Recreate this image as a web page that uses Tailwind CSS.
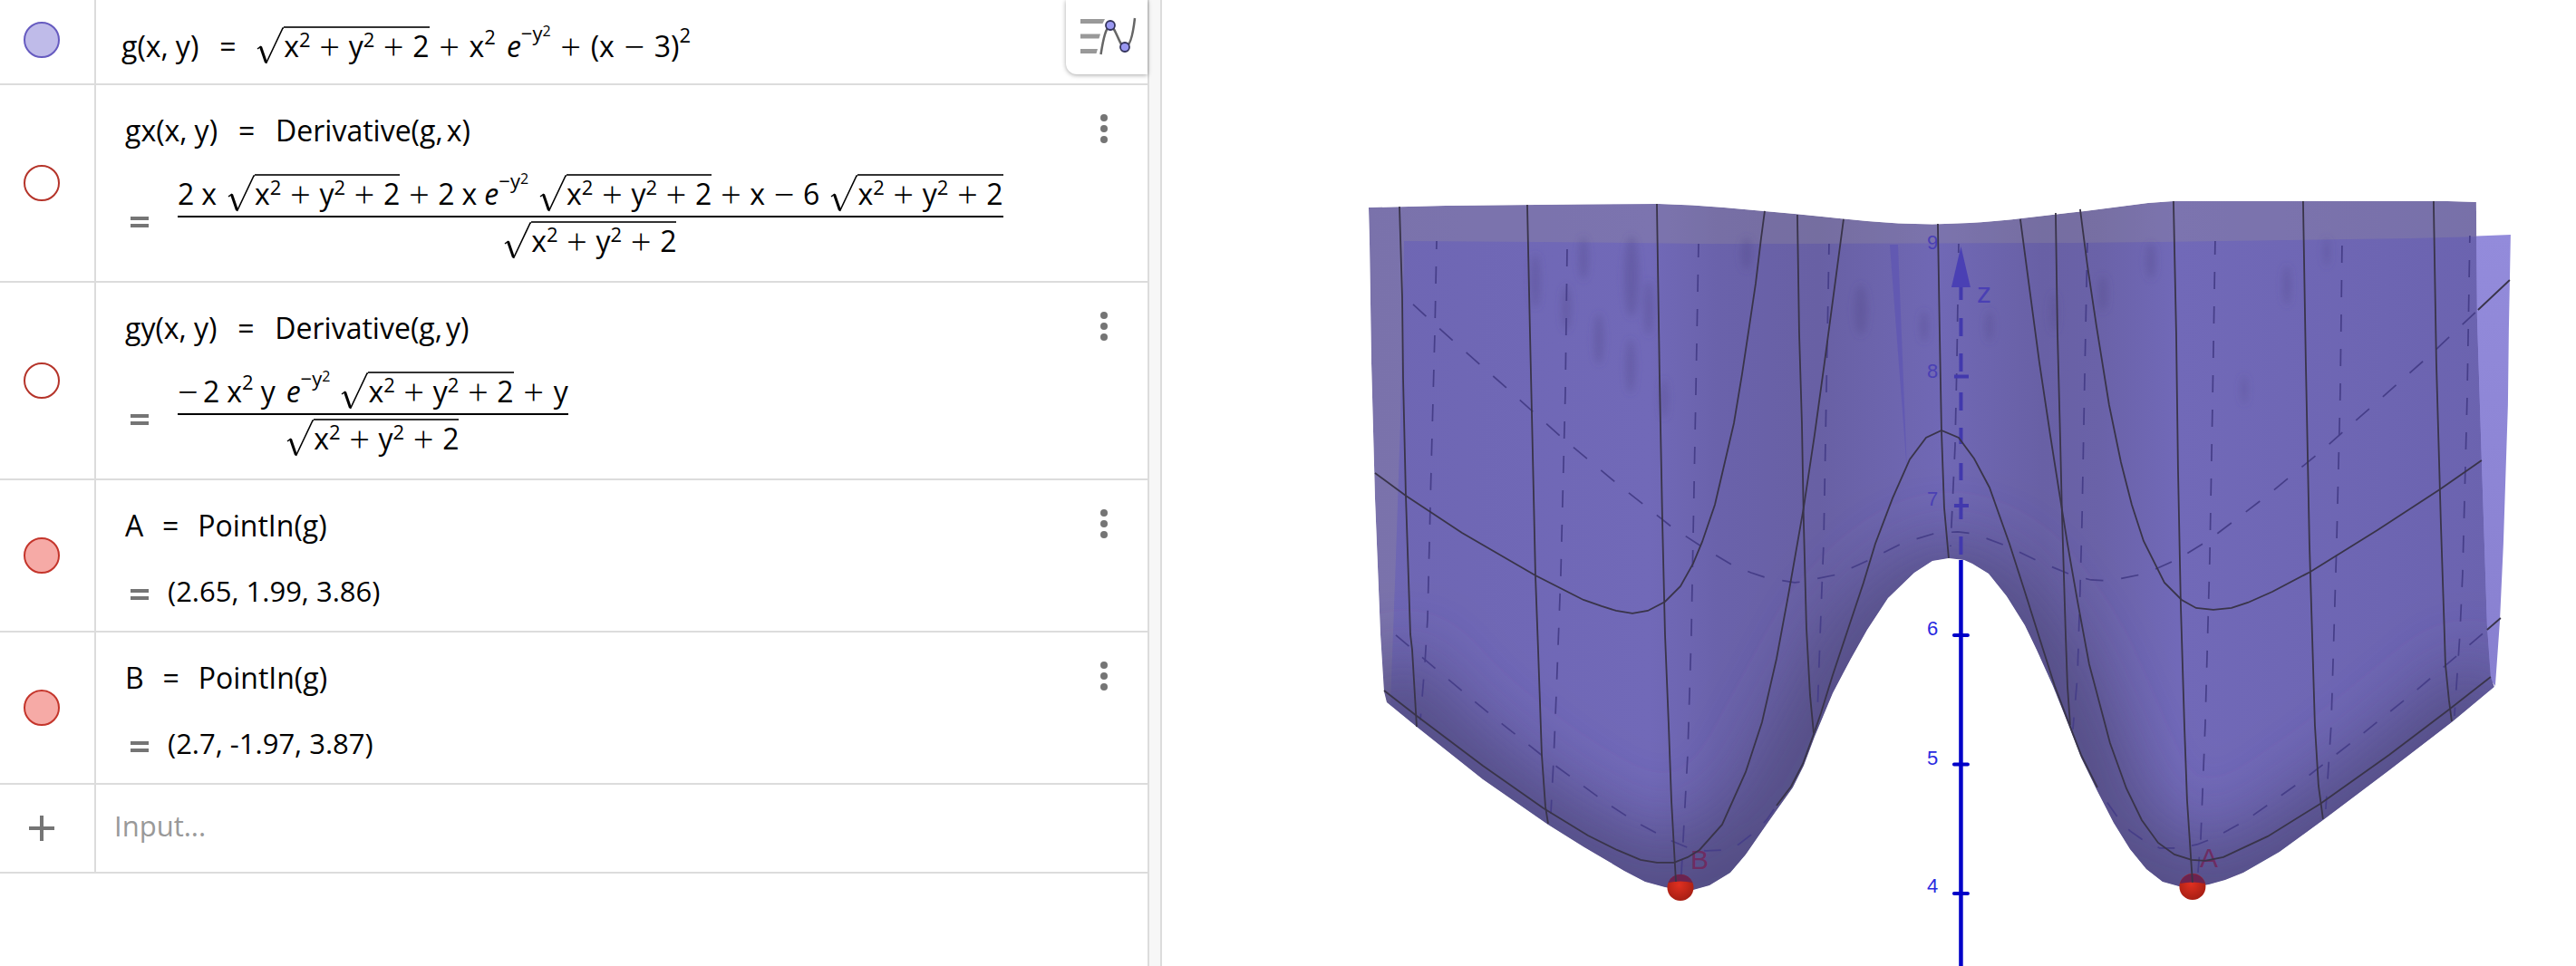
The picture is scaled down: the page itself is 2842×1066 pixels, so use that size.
<!DOCTYPE html>
<html lang="en">
<head>
<meta charset="utf-8">
<title>3D Calculator</title>
<script src="https://cdn.jsdelivr.net/npm/@tailwindcss/browser@4"></script>
</head>
<body class="bg-white text-black font-['Open_Sans',sans-serif]">
<svg class="hidden" aria-hidden="true">
  <symbol id="radical" viewBox="0 0 30 41">
    <path d="M1 24L5 21" fill="none" stroke="#000" stroke-width="1.5"/>
    <path d="M4.500 21.500L10.500 39" fill="none" stroke="#000" stroke-width="3"/>
    <path d="M10.500 40L29 1H30" fill="none" stroke="#000" stroke-width="1.600"/>
  </symbol>
  <symbol id="equals" viewBox="0 0 20 12"><path d="M0 0H20V4H0ZM0 8H20V12H0Z" fill="#757575"/></symbol>
  <symbol id="dots" viewBox="0 0 8 32"><g fill="#757575"><circle cx="4" cy="4" r="4"/><circle cx="4" cy="16" r="4"/><circle cx="4" cy="28" r="4"/></g></symbol>
</svg>
<div class="flex min-h-screen items-stretch">
  <main class="relative w-[44.55%] shrink-0 text-[32px] leading-10 whitespace-nowrap">

    <section class="flex border-b-2 border-[#dcdcdc]">
      <div class="flex w-[106px] shrink-0 items-center border-r-2 border-[#dcdcdc] pb-1 pl-[26px]">
        <button aria-label="Hide g" class="size-10 rounded-full border-2 border-[#665bc0] bg-[#bfbbe9]"></button>
      </div>
      <div class="pt-[29px] pb-[21px] pl-7">g(x,<span class="ml-2">y)</span><span class="inline-block w-16 text-center">=</span><svg class="inline-block h-[41px] w-[30px] align-[-8px]"><use href="#radical"/></svg><span class="inline-block border-t-2 border-[#333] leading-[38px]">x<sup class="text-[22px]">2</sup><span class="inline-block w-[42px] text-center align-[-3px] text-[40px] leading-none font-light">+</span>y<sup class="text-[22px]">2</sup><span class="inline-block w-[42px] text-center align-[-3px] text-[40px] leading-none font-light">+</span>2</span><span class="inline-block w-11 text-center align-[-3px] text-[40px] leading-none font-light">+</span>x<sup class="top-[-14px] text-[22px]">2</sup><i class="ml-3">e</i><sup class="top-[-18px] text-[22px]">−y<sup class="top-[-5px] text-base">2</sup></sup><span class="inline-block w-11 text-center align-[-3px] text-[40px] leading-none font-light">+</span>(x<span class="inline-block w-11 text-center align-[-3px] text-[40px] leading-none font-light">−</span>3)<sup class="top-[-16px] text-[22px]">2</sup></div>
    </section>

    <section class="flex border-b-2 border-[#dcdcdc]">
      <div class="flex w-[106px] shrink-0 items-center border-r-2 border-[#dcdcdc] pl-[26px]">
        <button aria-label="Show gx" class="size-10 rounded-full border-2 border-[#b5342a] bg-white"></button>
      </div>
      <div class="flex-1 pt-[30px] pb-6 pl-8">
        <div>gx(x,<span class="ml-2">y)</span><span class="inline-block w-16 text-center">=</span>Derivative(g,<span class="ml-1">x)</span></div>
        <div class="mt-4 flex items-center gap-8 pl-[6px]">
          <svg class="mt-6 h-3 w-5"><use href="#equals"/></svg>
          <div class="mt-3 flex flex-col">
            <div class="pb-1">2<span class="ml-2">x</span><svg class="ml-3 inline-block h-[41px] w-[30px] align-[-8px]"><use href="#radical"/></svg><span class="inline-block border-t-2 border-[#333] leading-[38px]">x<sup class="text-[22px]">2</sup><span class="inline-block w-[42px] text-center align-[-3px] text-[40px] leading-none font-light">+</span>y<sup class="text-[22px]">2</sup><span class="inline-block w-[42px] text-center align-[-3px] text-[40px] leading-none font-light">+</span>2</span><span class="inline-block w-[42px] text-center align-[-3px] text-[40px] leading-none font-light">+</span>2<span class="ml-2">x</span><i class="ml-2">e</i><sup class="top-[-18px] text-[22px]">−y<sup class="top-[-5px] text-base">2</sup></sup><svg class="ml-3 inline-block h-[41px] w-[30px] align-[-8px]"><use href="#radical"/></svg><span class="inline-block border-t-2 border-[#333] leading-[38px]">x<sup class="text-[22px]">2</sup><span class="inline-block w-[42px] text-center align-[-3px] text-[40px] leading-none font-light">+</span>y<sup class="text-[22px]">2</sup><span class="inline-block w-[42px] text-center align-[-3px] text-[40px] leading-none font-light">+</span>2</span><span class="inline-block w-[42px] text-center align-[-3px] text-[40px] leading-none font-light">+</span>x<span class="inline-block w-[42px] text-center align-[-3px] text-[40px] leading-none font-light">−</span>6<svg class="ml-3 inline-block h-[41px] w-[30px] align-[-8px]"><use href="#radical"/></svg><span class="inline-block border-t-2 border-[#333] leading-[38px]">x<sup class="text-[22px]">2</sup><span class="inline-block w-[42px] text-center align-[-3px] text-[40px] leading-none font-light">+</span>y<sup class="text-[22px]">2</sup><span class="inline-block w-[42px] text-center align-[-3px] text-[40px] leading-none font-light">+</span>2</span></div>
            <div class="border-t-2 border-black pt-1 text-center"><svg class="inline-block h-[41px] w-[30px] align-[-8px]"><use href="#radical"/></svg><span class="inline-block border-t-2 border-[#333] leading-[38px]">x<sup class="text-[22px]">2</sup><span class="inline-block w-[42px] text-center align-[-3px] text-[40px] leading-none font-light">+</span>y<sup class="text-[22px]">2</sup><span class="inline-block w-[42px] text-center align-[-3px] text-[40px] leading-none font-light">+</span>2</span></div>
          </div>
        </div>
      </div>
      <button aria-label="More options for gx" class="absolute right-0 flex size-24 items-center justify-center"><svg class="h-8 w-2"><use href="#dots"/></svg></button>
    </section>

    <section class="flex border-b-2 border-[#dcdcdc]">
      <div class="flex w-[106px] shrink-0 items-center border-r-2 border-[#dcdcdc] pl-[26px]">
        <button aria-label="Show gy" class="size-10 rounded-full border-2 border-[#b5342a] bg-white"></button>
      </div>
      <div class="flex-1 pt-[30px] pb-6 pl-8">
        <div>gy(x,<span class="ml-2">y)</span><span class="inline-block w-16 text-center">=</span>Derivative(g,<span class="ml-1">y)</span></div>
        <div class="mt-4 flex items-center gap-8 pl-[6px]">
          <svg class="mt-6 h-3 w-5"><use href="#equals"/></svg>
          <div class="mt-3 flex flex-col">
            <div class="pb-1"><span class="inline-block w-7 align-[-3px] text-[40px] leading-none font-light">−</span>2<span class="ml-2">x</span><sup class="top-[-14px] text-[22px]">2</sup><span class="ml-2">y</span><i class="ml-3">e</i><sup class="top-[-18px] text-[22px]">−y<sup class="top-[-5px] text-base">2</sup></sup><svg class="ml-3 inline-block h-[41px] w-[30px] align-[-8px]"><use href="#radical"/></svg><span class="inline-block border-t-2 border-[#333] leading-[38px]">x<sup class="text-[22px]">2</sup><span class="inline-block w-[42px] text-center align-[-3px] text-[40px] leading-none font-light">+</span>y<sup class="text-[22px]">2</sup><span class="inline-block w-[42px] text-center align-[-3px] text-[40px] leading-none font-light">+</span>2</span><span class="inline-block w-11 text-center align-[-3px] text-[40px] leading-none font-light">+</span>y</div>
            <div class="border-t-2 border-black pt-1 text-center"><svg class="inline-block h-[41px] w-[30px] align-[-8px]"><use href="#radical"/></svg><span class="inline-block border-t-2 border-[#333] leading-[38px]">x<sup class="text-[22px]">2</sup><span class="inline-block w-[42px] text-center align-[-3px] text-[40px] leading-none font-light">+</span>y<sup class="text-[22px]">2</sup><span class="inline-block w-[42px] text-center align-[-3px] text-[40px] leading-none font-light">+</span>2</span></div>
          </div>
        </div>
      </div>
      <button aria-label="More options for gy" class="absolute right-0 flex size-24 items-center justify-center"><svg class="h-8 w-2"><use href="#dots"/></svg></button>
    </section>

    <section class="flex border-b-2 border-[#dcdcdc]">
      <div class="flex w-[106px] shrink-0 items-center border-r-2 border-[#dcdcdc] pl-[26px]">
        <button aria-label="Hide A" class="size-10 rounded-full border-2 border-[#c4352b] bg-[#f6aaa6]"></button>
      </div>
      <div class="flex-1 pt-[30px] pb-6 pl-8">
        <div>A<span class="inline-block w-[60px] text-center">=</span>PointIn(g)</div>
        <div class="mt-8 flex items-center gap-[21px] pl-[6px] text-[31px]">
          <svg class="mt-2 h-3 w-5"><use href="#equals"/></svg>
          <span>(2.65, 1.99, 3.86)</span>
        </div>
      </div>
      <button aria-label="More options for A" class="absolute right-0 flex size-24 items-center justify-center"><svg class="h-8 w-2"><use href="#dots"/></svg></button>
    </section>

    <section class="flex border-b-2 border-[#dcdcdc]">
      <div class="flex w-[106px] shrink-0 items-center border-r-2 border-[#dcdcdc] pl-[26px]">
        <button aria-label="Hide B" class="size-10 rounded-full border-2 border-[#c4352b] bg-[#f6aaa6]"></button>
      </div>
      <div class="flex-1 pt-[30px] pb-6 pl-8">
        <div>B<span class="inline-block w-[60px] text-center">=</span>PointIn(g)</div>
        <div class="mt-8 flex items-center gap-[21px] pl-[6px] text-[31px]">
          <svg class="mt-2 h-3 w-5"><use href="#equals"/></svg>
          <span>(2.7, -1.97, 3.87)</span>
        </div>
      </div>
      <button aria-label="More options for B" class="absolute right-0 flex size-24 items-center justify-center"><svg class="h-8 w-2"><use href="#dots"/></svg></button>
    </section>

    <section class="flex h-[98px] border-b-2 border-[#dcdcdc]">
      <div class="flex w-[106px] shrink-0 items-center border-r-2 border-[#dcdcdc] pl-8">
        <button aria-label="Add item"><svg class="size-7" viewBox="0 0 28 28"><path d="M12 0H16V12H28V16H16V28H12V16H0V12H12Z" fill="#757575"/></svg></button>
      </div>
      <input aria-label="Input" placeholder="Input..." class="min-w-0 flex-1 pb-1.5 pl-5 text-[31px] leading-10 outline-none placeholder:text-[#999]">
    </section>

    <button aria-label="Algebra view" class="absolute top-0 right-0 flex h-[82px] w-[90px] items-start rounded-bl-xl bg-white pt-4 pl-4 shadow-[0_1px_5px_rgba(0,0,0,0.35)]">
      <svg class="h-12 w-16 shrink-0" viewBox="1192 16 64 48">
        <path d="M1192 21H1219L1216.500 26H1192ZM1192 37.500H1214L1212.500 42.500H1192ZM1192 54H1211L1209.500 59H1192Z" fill="#999"/>
        <path d="M1214.500 60C1217 44 1220 29 1225 29C1231 29 1235 52 1241 52C1247 52 1250 38 1252 20" fill="none" stroke="#666" stroke-width="2.500"/>
        <g fill="#9a98f2" stroke="#33335c" stroke-width="1.800"><circle cx="1225" cy="28" r="5"/><circle cx="1241" cy="52" r="5"/></g>
      </svg>
    </button>
  </main>

  <div class="w-4 shrink-0 border-x-2 border-[#dcdcdc] bg-[#f7f7f7]"></div>

  <div class="min-w-0 flex-1">
    <svg class="block h-auto w-full font-['Liberation_Sans',sans-serif]" viewBox="1282 0 1560 1066" role="img" aria-label="Surface g with points A and B">
      <defs>
        <path id="front" d="M1510 229L1595 227L1745 225.500L1830 225L1867 226.500L1902 229L1980 236L2010 239L2060 244Q2093 247 2132 247.500Q2190 246 2230 241L2300 233L2370 224L2398 222H2700L2732 223L2733 350L2738 508L2744 690L2748 747L2752 758L2705 797L2636 850L2563 905L2515 940L2475 963L2455 971L2437 976L2420 979L2404 978L2386 973L2368 959L2350 937L2332 908L2314 873L2296 836L2283 802L2265 757L2247 717L2234 690L2214 658L2194 633L2176 622L2167 618L2150 616L2132 619L2112 632L2083 660L2060 695L2042 727L2022 765L2002 813L1990 845L1978 869L1963 890L1951 907L1944 917L1926 943L1909 963L1886 977L1868 982H1854L1837 979L1815 973L1792 961L1748 935L1708 910L1636 860L1563 802L1530 775L1527 763L1523 700L1517 550L1513 400L1511 267Z"/>
        <clipPath id="clip"><use href="#front"/></clipPath>
        <linearGradient id="folds" gradientUnits="userSpaceOnUse" x1="1510" y1="0" x2="2750" y2="0">
          <stop offset="0" stop-color="#6e66b3"/><stop offset=".25" stop-color="#7169b8"/><stop offset=".31" stop-color="#6a62ab"/><stop offset=".4" stop-color="#6860a4"/><stop offset=".51" stop-color="#7068b5"/><stop offset=".6" stop-color="#6860a5"/><stop offset=".65" stop-color="#6a62a8"/><stop offset=".72" stop-color="#7169b8"/><stop offset="1" stop-color="#6b63af"/>
        </linearGradient>
        <linearGradient id="rear" x1="0" y1="0" x2="0" y2="1"><stop offset="0" stop-color="#938bdb"/><stop offset="1" stop-color="#8880d0"/></linearGradient>
        <radialGradient id="ball" cx=".45" cy=".4" r=".6"><stop offset="0" stop-color="#e03020"/><stop offset="1" stop-color="#a81f14"/></radialGradient>
        <filter id="soft" filterUnits="userSpaceOnUse" x="1400" y="150" width="1440" height="900"><feGaussianBlur stdDeviation="36"/></filter>
        <filter id="smudge" filterUnits="userSpaceOnUse" x="1400" y="150" width="1440" height="900"><feGaussianBlur stdDeviation="4"/></filter>
      </defs>

      <path d="M2720 261L2770 259L2768 363L2767 447L2762 600L2758 687L2753 757L2740 740Z" fill="url(#rear)"/>
      <g clip-path="url(#clip)">
        <use href="#front" fill="url(#folds)"/>
        <path d="M1500 210H2740V261L2660 263L2380 267L2280 268L1980 269L1880 269L1700 267L1549 266L1548 327L1545 467L1540 617L1534 780H1500Z" fill="#9a9498" fill-opacity=".27"/>
        <g filter="url(#soft)" fill="none" stroke="#4c4678">
          <path d="M1500 760L1563 832L1636 892L1708 942L1792 985L1854 1006L1910 985L1944 925" stroke-width="140" stroke-opacity=".75"/>
          <path d="M2325 925L2350 965L2390 1002L2437 1002L2515 970L2636 885L2770 775" stroke-width="130" stroke-opacity=".75"/>
          <path d="M1944 925L2000 820L2060 710L2112 660L2150 642L2194 660L2247 730L2296 840L2325 915" stroke-width="90" stroke-opacity=".75"/>
        </g>
        <path d="M2085 270H2094L2104 520Z" fill="#5a50b4" fill-opacity=".55"/>
        <g fill="#544c8c" fill-opacity=".4" filter="url(#smudge)">
          <ellipse cx="2053" cy="342" rx="7" ry="28"/><ellipse cx="2123" cy="360" rx="4" ry="17"/><ellipse cx="2195" cy="360" rx="4" ry="17"/><ellipse cx="2266" cy="345" rx="4" ry="22"/><ellipse cx="2320" cy="324" rx="5" ry="20"/><ellipse cx="2373" cy="288" rx="5" ry="20"/><ellipse cx="1747" cy="285" rx="5" ry="24"/><ellipse cx="1800" cy="305" rx="8" ry="45"/><ellipse cx="1819" cy="340" rx="5" ry="30"/><ellipse cx="1764" cy="374" rx="5" ry="28"/><ellipse cx="1799" cy="404" rx="5" ry="30"/><ellipse cx="1728" cy="340" rx="5" ry="25"/><ellipse cx="1694" cy="310" rx="5" ry="30"/><ellipse cx="1927" cy="280" rx="6" ry="18"/><ellipse cx="2523" cy="315" rx="4" ry="22"/><ellipse cx="2567" cy="278" rx="3" ry="16"/><ellipse cx="2476" cy="430" rx="3" ry="16"/><ellipse cx="1836" cy="440" rx="4" ry="22"/>
        </g>
      </g>

      <g fill="none" stroke="#463e88" stroke-width="1.700" stroke-dasharray="19 19">
        <path d="M1585 266L1583 367L1579 517L1575 683L1572 733L1567 795" stroke-dashoffset="10"/>
        <path d="M1729 275L1727 433L1722 633L1717 767L1714 840L1711 898"/>
        <path d="M1874 269L1871 433L1866 700L1862 833L1855 965" stroke-dashoffset="4"/>
        <path d="M2018 269L2015 433L2012 600L2010 650L2007 733L2005 790" stroke-dashoffset="7"/>
        <path d="M2161 269L2159 400L2157 493L2152 603" stroke-dashoffset="9"/>
        <path d="M2303 268L2300 417L2297 577L2295 650L2292 747L2287 805" stroke-dashoffset="8"/>
        <path d="M2444 266L2441 450L2438 617L2433 800L2428 927L2425 963" stroke-dashoffset="4"/>
        <path d="M2584 271L2582 433L2578 600L2572 800L2566 893"/>
        <path d="M2725 260L2722 440L2717 633L2714 700L2708 790" stroke-dashoffset="11"/>
        <path stroke-dasharray="19.500 20" d="M1559 336L1603 376L1662 428L1722 482L1782 532L1845 582L1877 603L1912 624L1932 632L1950 638L1980 643L1988 642L2027 634L2062 618L2100 599L2137 588L2160 587L2178 589L2215 603L2250 620L2287 635L2307 640L2327 641L2367 633L2403 617L2437 596L2500 548L2562 497L2622 444L2682 391L2734 342"/>
        <path d="M1540 701L1585 739L1646 790L1708 839L1772 886L1806 908L1842 927L1866 937L1882 939L1902 938L1918 932L1935 919L1949 905L1960 889"/>
        <path d="M2314 870L2337 903L2350 917L2367 929L2383 936L2404 936L2424 932L2442 925L2477 906L2542 860L2604 812L2667 761L2729 708L2744 695" stroke-dashoffset="19"/>
      </g>

      <g fill="#4a40b4" font-size="22">
        <text x="2126" y="275">9</text><text x="2126" y="417">8</text><text x="2126" y="558">7</text>
        <text x="2181" y="334" font-size="32">z</text>
        <path d="M2163.500 272L2174 317H2153Z"/>
        <path d="M2163.500 317V331M2163.500 351V371M2163.500 390V410M2163.500 433V453M2163.500 472V490M2163.500 511V530M2163.500 549V573M2163.500 592V612M2156 415.500H2172M2156 558H2172" fill="none" stroke="#4239ad" stroke-width="4"/>
      </g>
      <g fill="#2a2ae0" font-size="22">
        <text x="2126" y="701">6</text><text x="2126" y="844">5</text><text x="2126" y="985">4</text>
        <path d="M2163.500 618V1066" stroke="#0000c8" stroke-width="4.500"/>
        <path d="M2156 701H2171M2156 843.500H2171M2156 986H2171" stroke="#0000c8" stroke-width="4" stroke-linecap="round"/>
      </g>

      <g font-size="30" fill="#6e2c62"><text x="1865" y="959">B</text><text x="2427" y="957">A</text></g>
      <circle cx="1854" cy="979.500" r="14.500" fill="url(#ball)"/><path d="M1840.500 974A14.500 14.500 0 0 1 1867.500 974Q1854 971 1840.500 974" fill="#6b2350"/>
      <circle cx="2419" cy="978.500" r="14.500" fill="url(#ball)"/><path d="M2405 975A14.500 14.500 0 0 1 2433 975Q2419 972 2405 975" fill="#6b2350"/>

      <g fill="none" stroke="#393449" stroke-width="1.800">
        <path d="M1544 228L1547 327L1548 417L1551 547L1556 700L1558 717L1563 802"/>
        <path d="M1685 226L1688 367L1691 500L1694 635L1697 717L1701 833L1705 890L1708 909"/>
        <path d="M1828 225L1831 417L1834 573L1837 700L1841 800L1844 883L1849 973"/>
        <path d="M1983 237L1985 367L1988 467L1990 577L1993 693L1997 767L2001 809"/>
        <path d="M2138 247L2140 367L2142 475L2145 560L2150 616"/>
        <path d="M2268 235L2270 367L2273 483L2275 567L2279 700L2281 757L2284 800"/>
        <path d="M2398 222L2401 367L2403 517L2406 667L2410 800L2413 883L2419 974"/>
        <path d="M2541 222L2544 400L2548 600L2551 700L2554 800L2558 867L2563 904"/>
        <path d="M2685 222L2688 400L2693 577L2697 700L2698 733L2702 773L2705 796"/>
        <path d="M1517 522L1551 547L1613 588L1694 635L1747 662L1767 669L1783 674L1801 677L1818 674L1837 664L1854 647L1868 622L1878 598L1892 557L1903 510L1913 467L1922 413L1930 360L1937 313L1943 263L1947 233"/>
        <path d="M2295 231L2303 293L2313 360L2327 447L2340 510L2352 557L2365 597L2388 643L2407 662L2423 671L2442 673L2462 671L2480 665L2507 653L2549 631L2623 585L2692 540L2738 508"/>
        <path d="M1960 889L1976 868L1989 843L2000 813L2009 787L2022 745L2038 697L2056 643L2069 600L2088 550L2107 507L2125 483L2142 475L2161 483L2178 506L2195 538L2217 600L2234 653L2252 710L2267 757L2284 802L2296 833L2314 869"/>
        <path d="M2034 242L2025 310L2013 400L2002 480L1990 560L1983 600L1973 657L1960 727L1944 797L1926 852L1900 910L1875 938L1862 946L1847 952H1828L1810 949L1784 938L1752 922L1703 892L1636 845L1563 790L1527 762"/>
        <path d="M2229 242L2238 310L2250 400L2262 480L2273 550L2281 600L2292 663L2305 733L2328 820L2346 870L2363 905L2381 930L2399 943L2418 949L2433 950L2453 946L2502 923L2560 887L2636 833L2702 783L2748 747"/>
        <path d="M2734 342L2769 309M2744 695L2759 682"/>
      </g>
    </svg>
  </div>
</div>
</body>
</html>
